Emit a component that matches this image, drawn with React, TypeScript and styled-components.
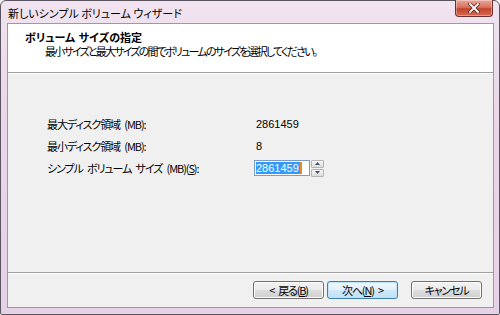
import styled, { createGlobalStyle } from "styled-components";

const GlobalStyle = createGlobalStyle`
  html, body {
    margin: 0;
    padding: 0;
    background: #ffffff;
  }
  body {
    font-family: "Noto Sans CJK JP", "Liberation Sans", sans-serif;
    font-size: 11px;
    font-feature-settings: "palt";
    color: #000000;
  }
`;

const Window = styled.div`
  box-sizing: border-box;
  width: 500px;
  height: 315px;
  border: 1px solid #5a5560;
  border-radius: 6px 6px 2px 2px;
  background: linear-gradient(180deg, #f1e3f0 0%, #e9d6e8 40%, #e6d2e6 100%);
  padding: 0 5px 6px 6px;
  display: flex;
  flex-direction: column;
`;

const TitleBar = styled.div`
  height: 22px;
  display: flex;
  align-items: center;
  justify-content: space-between;
  padding-left: 1px;
`;

const TitleText = styled.span`
  font-size: 11px;
  line-height: 14px;
  margin-top: 2px;
  color: #000000;
`;

const CloseButton = styled.div`
  align-self: flex-start;
  margin-top: -1px;
  margin-right: 1px;
  width: 38px;
  height: 17px;
  box-sizing: border-box;
  border: 1px solid #6b3030;
  border-top: none;
  border-radius: 0 0 4px 4px;
  background: linear-gradient(180deg, #e8a59a 0%, #d9735f 45%, #c2432c 55%, #d9694f 100%);
  display: flex;
  align-items: center;
  justify-content: center;
  box-shadow: inset 0 0 0 1px rgba(255, 255, 255, 0.35);
`;

const Client = styled.div`
  flex: 1;
  display: flex;
  flex-direction: column;
  border: 1px solid #9a9aa6;
  background: #f0f0f0;
`;

const Header = styled.div`
  background: #ffffff;
  border-bottom: 1px solid #a0a0a0;
  box-shadow: 0 1px 0 #ffffff;
  padding: 7px 0 0 17px;
  height: 41px;
`;

const HeaderTitle = styled.div`
  font-weight: bold;
  font-size: 11px;
  line-height: 13px;
  word-spacing: 1px;
`;

const HeaderSub = styled.div`
  font-size: 11px;
  line-height: 14px;
  padding-left: 20px;
  letter-spacing: -1.8px;
`;

const Body = styled.div`
  flex: 1;
  padding: 40px 0 0 39px;
  display: grid;
  grid-template-columns: 207px auto;
  grid-auto-rows: 22px;
  align-content: start;
  align-items: center;
`;

const Label = styled.span`
  font-size: 11px;
  line-height: 14px;
  letter-spacing: -1.1px;
  word-spacing: 3px;
  white-space: nowrap;
`;

const Value = styled.span`
  font-family: "Liberation Sans", sans-serif;
  font-size: 11px;
  padding-left: 2px;
`;

const SpinBox = styled.div`
  display: flex;
  align-items: center;
`;

const SpinInput = styled.div`
  box-sizing: border-box;
  width: 56px;
  height: 16px;
  border: 1px solid #7a9cc6;
  background: #ffffff;
  padding: 1px 1px;
  display: flex;
  align-items: center;
`;

const Selected = styled.span`
  font-family: "Liberation Sans", sans-serif;
  font-size: 11px;
  line-height: 12px;
  background: #3399ff;
  color: #ffffff;
  border-right: 2px solid #e88a2a;
  padding-right: 1px;
`;

const SpinButtons = styled.div`
  margin-left: 1px;
  display: flex;
  flex-direction: column;
  gap: 1px;
`;

const SpinArrow = styled.div`
  box-sizing: border-box;
  width: 13px;
  height: 8px;
  border: 1px solid #b5b5b5;
  border-radius: 1px;
  background: linear-gradient(180deg, #f6f6f6, #dcdcdc);
  display: flex;
  align-items: center;
  justify-content: center;
`;

const Footer = styled.div`
  height: 34px;
  border-top: 1px solid #a0a0a0;
  box-shadow: inset 0 1px 0 #ffffff;
  display: flex;
  align-items: center;
  padding: 0 11px 0 245px;
  gap: 3px;
`;

const Button = styled.div<{ $primary?: boolean; $gapLeft?: number }>`
  box-sizing: border-box;
  width: 71px;
  height: 18px;
  margin-left: ${(p) => p.$gapLeft ?? 0}px;
  border: 1px solid ${(p) => (p.$primary ? "#3c7fb1" : "#707070")};
  border-radius: 3px;
  background: ${(p) =>
    p.$primary
      ? "linear-gradient(180deg, #f0f8fd 0%, #e3f1fb 48%, #cfe8f8 52%, #c1e1f6 100%)"
      : "linear-gradient(180deg, #f2f2f2 0%, #ebebeb 48%, #dddddd 52%, #cfcfcf 100%)"};
  box-shadow: inset 0 0 0 1px ${(p) => (p.$primary ? "#bfe4f9" : "#fcfcfc")};
  display: flex;
  align-items: center;
  justify-content: center;
  font-size: 11px;
  line-height: 14px;
  letter-spacing: -1.2px;
  word-spacing: 3px;
  white-space: pre;
`;

const U = styled.span`
  text-decoration: underline;
`;

export default function App() {
  return (
    <>
      <GlobalStyle />
      <Window>
        <TitleBar>
          <TitleText>新しいシンプル ボリューム ウィザード</TitleText>
          <CloseButton>
            <svg width="12" height="10" viewBox="0 0 12 10">
              <path d="M2 1 L10 9 M10 1 L2 9" stroke="#4a2020" strokeWidth="3.2" strokeLinecap="square" />
              <path d="M2 1 L10 9 M10 1 L2 9" stroke="#ffffff" strokeWidth="1.8" strokeLinecap="square" />
            </svg>
          </CloseButton>
        </TitleBar>
        <Client>
          <Header>
            <HeaderTitle>ボリューム サイズの指定</HeaderTitle>
            <HeaderSub>最小サイズと最大サイズの間でボリュームのサイズを選択してください。</HeaderSub>
          </Header>
          <Body>
            <Label>最大ディスク領域 (MB):</Label>
            <Value>2861459</Value>
            <Label>最小ディスク領域 (MB):</Label>
            <Value>8</Value>
            <Label>
              シンプル ボリューム サイズ (MB)(<U>S</U>):
            </Label>
            <SpinBox>
              <SpinInput>
                <Selected>2861459</Selected>
              </SpinInput>
              <SpinButtons>
                <SpinArrow>
                  <svg width="5" height="3" viewBox="0 0 5 3">
                    <path d="M0 3 L2.5 0 L5 3 Z" fill="#3f4f6a" />
                  </svg>
                </SpinArrow>
                <SpinArrow>
                  <svg width="5" height="3" viewBox="0 0 5 3">
                    <path d="M0 0 L2.5 3 L5 0 Z" fill="#3f4f6a" />
                  </svg>
                </SpinArrow>
              </SpinButtons>
            </SpinBox>
          </Body>
          <Footer>
            <Button>
              {"< "}戻る(<U>B</U>)
            </Button>
            <Button $primary>
              次へ(<U>N</U>){" >"}
            </Button>
            <Button $gapLeft={10}>キャンセル</Button>
          </Footer>
        </Client>
      </Window>
    </>
  );
}
